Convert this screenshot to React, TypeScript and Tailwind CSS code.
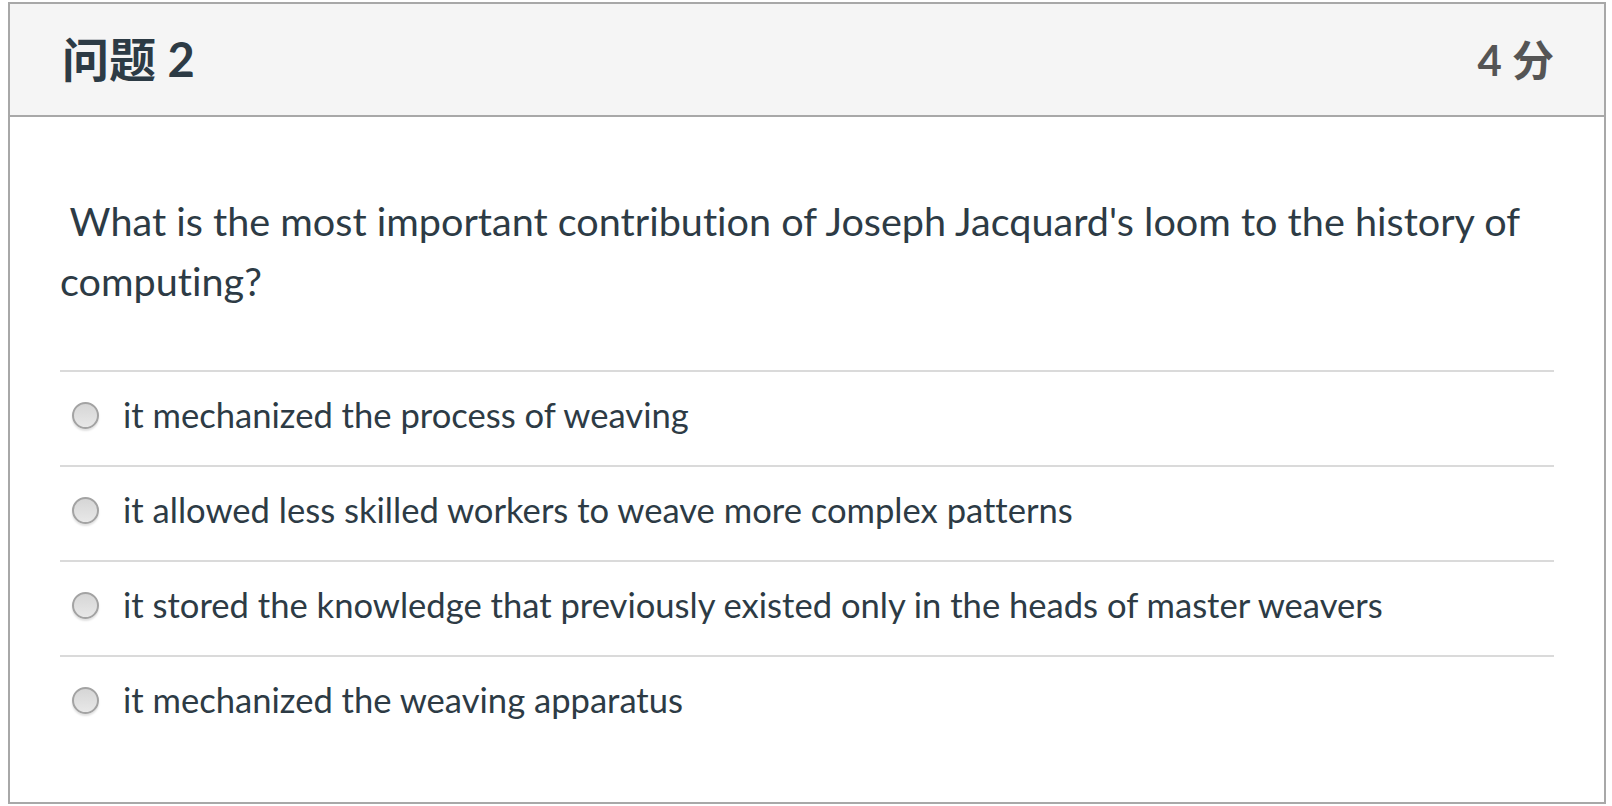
import React from "react";

const options = [
  "it mechanized the process of weaving",
  "it allowed less skilled workers to weave more complex patterns",
  "it stored the knowledge that previously existed only in the heads of master weavers",
  "it mechanized the weaving apparatus",
];

function Radio() {
  return (
    <span className="inline-block w-[27px] h-[27px] rounded-full border-2 border-[#a3a3a3] bg-gradient-to-b from-[#d6d6d6] to-[#e8e8e8] shadow-[0_2px_2px_rgba(0,0,0,0.12)] shrink-0" />
  );
}

export default function App() {
  return (
    <div className="w-[1612px] h-[806px] bg-white pt-[2px] pl-[8px] font-['Lato','Noto_Sans_CJK_SC',sans-serif] text-[#2d3b45] [font-variant-ligatures:none]">
      <div className="w-[1598px] h-[802px] border-2 border-[#a8a8a8] flex flex-col">
        <div className="h-[113px] bg-[#f5f5f5] border-b-2 border-[#a8a8a8] flex items-center justify-between pl-[52px] pr-[50px]">
          <div className="text-[47px] font-bold leading-none">问题 2</div>
          <div className="text-[42px] text-[#555555] font-bold leading-none">4 分</div>
        </div>
        <div className="px-[50px] pt-[74px]">
          <div className="text-[39.6px] leading-[60px]">&nbsp;What is the most important contribution of Joseph Jacquard's loom to the history of computing?</div>
          <div className="mt-[59px]">
            {options.map((o, i) => (
              <div key={i} className="border-t-2 border-[#dadada] h-[95px] flex items-center pl-[12px] pb-[6px] gap-[24px]">
                <Radio />
                <span className="text-[34.6px] leading-none">{o}</span>
              </div>
            ))}
          </div>
        </div>
      </div>
    </div>
  );
}
